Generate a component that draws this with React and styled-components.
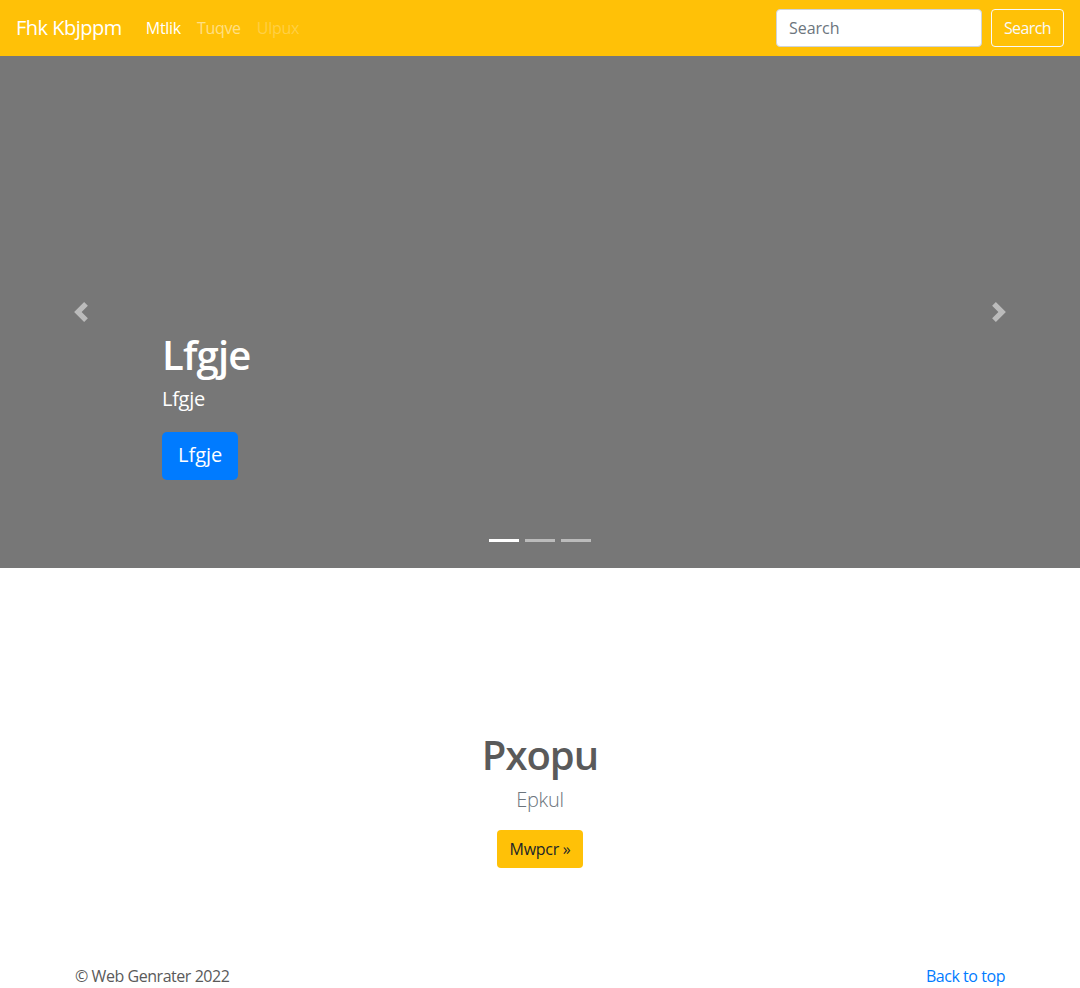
import React from "react";
import styled, { createGlobalStyle } from "styled-components";

const GlobalStyle = createGlobalStyle`
  * { box-sizing: border-box; }
  body {
    margin: 0;
    font-family: "Open Sans", "Noto Sans", Arial, sans-serif;
    font-size: 16px;
    line-height: 1.5;
    color: #5a5a5a;
    background: #fff;
  }
`;

const Navbar = styled.nav`
  height: 56px;
  background: #ffc107;
  display: flex;
  align-items: center;
  padding: 0 16px;
`;

const Brand = styled.a`
  font-size: 20px;
  line-height: 30px;
  color: #fff;
  margin-right: 16px;
  text-decoration: none;
  letter-spacing: -0.5px;
`;

const NavList = styled.ul`
  display: flex;
  list-style: none;
  margin: 0;
  padding: 0;
  flex: 1;
`;

const NavLink = styled.a`
  display: block;
  padding: 8px;
  font-size: 16px;
  text-decoration: none;
  letter-spacing: -0.3px;
  color: ${(p) =>
    p.$state === "active"
      ? "#fff"
      : p.$state === "disabled"
      ? "rgba(255,255,255,.25)"
      : "rgba(255,255,255,.5)"};
`;

const SearchForm = styled.form`
  display: flex;
  align-items: center;
  gap: 9px;
`;

const SearchInput = styled.input`
  width: 206px;
  height: 38px;
  padding: 6px 12px;
  font-family: inherit;
  font-size: 16px;
  color: #495057;
  border: 1px solid #ced4da;
  border-radius: 4px;
  background: #fff;
  &::placeholder { color: #6c757d; }
`;

const OutlineButton = styled.button`
  height: 38px;
  padding: 6px 12px;
  font-family: inherit;
  font-size: 16px;
  color: #f8f9fa;
  background: transparent;
  border: 1px solid #f8f9fa;
  border-radius: 4px;
  letter-spacing: -0.6px;
`;

const Carousel = styled.div`
  position: relative;
  height: 512px;
  background: #777;
  overflow: hidden;
`;

const Caption = styled.div`
  position: absolute;
  left: 15%;
  right: 15%;
  bottom: 88px;
  color: #fff;
  text-align: left;
`;

const CaptionTitle = styled.h1`
  margin: 0 0 5px;
  font-size: 40px;
  font-weight: 600;
  line-height: 48px;
  letter-spacing: -0.8px;
`;

const CaptionText = styled.p`
  margin: 0 0 18px;
  font-size: 20px;
  line-height: 30px;
  letter-spacing: -0.3px;
`;

const PrimaryButton = styled.a`
  display: inline-block;
  height: 48px;
  padding: 8px 16px;
  font-size: 20px;
  line-height: 30px;
  color: #fff;
  background: #007bff;
  border-radius: 5px;
  text-decoration: none;
`;

const Control = styled.a`
  position: absolute;
  top: 0;
  bottom: 0;
  width: 15%;
  ${(p) => (p.$side === "prev" ? "left: 0;" : "right: 0;")}
  display: flex;
  align-items: center;
  justify-content: center;
  opacity: 0.5;
`;

const Indicators = styled.ol`
  position: absolute;
  left: 0;
  right: 0;
  bottom: 26px;
  display: flex;
  justify-content: center;
  gap: 6px;
  margin: 0;
  padding: 0;
  list-style: none;
`;

const Indicator = styled.li`
  width: 30px;
  height: 3px;
  background: #fff;
  opacity: ${(p) => (p.$active ? 1 : 0.5)};
`;

const Marketing = styled.section`
  padding-top: 163px;
  display: flex;
  flex-direction: column;
  align-items: center;
  text-align: center;
`;

const Heading = styled.h2`
  margin: 0 0 6px;
  font-size: 40px;
  font-weight: 600;
  line-height: 48px;
  color: #5a5a5a;
  letter-spacing: -1px;
`;

const Lead = styled.p`
  margin: 0 0 15px;
  font-size: 20px;
  font-weight: 300;
  line-height: 30px;
  color: #6c757d;
  letter-spacing: -0.3px;
`;

const WarningButton = styled.a`
  display: inline-block;
  height: 38px;
  padding: 6px 13px;
  font-size: 16px;
  line-height: 26px;
  color: #212529;
  background: #ffc107;
  border-radius: 4px;
  text-decoration: none;
  letter-spacing: -0.3px;
`;

const Footer = styled.footer`
  width: 960px;
  margin: 96px auto 0;
  padding: 0 15px;
  display: flex;
  justify-content: space-between;
  line-height: 24px;
  font-size: 16px;
  letter-spacing: -0.45px;
`;

const FooterLink = styled.a`
  color: #007bff;
  text-decoration: none;
`;

const Chevron = ({ dir }) => (
  <svg width="20" height="20" viewBox="0 0 8 8" fill="#fff">
    {dir === "prev" ? (
      <path d="M5.25 0l-4 4 4 4 1.5-1.5L4.25 4l2.5-2.5L5.25 0z" />
    ) : (
      <path d="M2.75 0l-1.5 1.5L3.75 4l-2.5 2.5L2.75 8l4-4-4-4z" />
    )}
  </svg>
);

export default function App() {
  return (
    <>
      <GlobalStyle />
      <Navbar>
        <Brand href="#">Fhk Kbjppm</Brand>
        <NavList>
          <li><NavLink $state="active" href="#">Mtlik</NavLink></li>
          <li><NavLink href="#">Tuqve</NavLink></li>
          <li><NavLink $state="disabled" href="#">Ulpux</NavLink></li>
        </NavList>
        <SearchForm onSubmit={(e) => e.preventDefault()}>
          <SearchInput type="text" placeholder="Search" />
          <OutlineButton type="submit">Search</OutlineButton>
        </SearchForm>
      </Navbar>

      <Carousel>
        <Indicators>
          <Indicator $active />
          <Indicator />
          <Indicator />
        </Indicators>
        <Caption>
          <CaptionTitle>Lfgje</CaptionTitle>
          <CaptionText>Lfgje</CaptionText>
          <PrimaryButton href="#">Lfgje</PrimaryButton>
        </Caption>
        <Control $side="prev" href="#">
          <Chevron dir="prev" />
        </Control>
        <Control $side="next" href="#">
          <Chevron dir="next" />
        </Control>
      </Carousel>

      <Marketing>
        <Heading>Pxopu</Heading>
        <Lead>Epkul</Lead>
        <WarningButton href="#">Mwpcr »</WarningButton>
      </Marketing>

      <Footer>
        <span>© Web Genrater 2022</span>
        <FooterLink href="#">Back to top</FooterLink>
      </Footer>
    </>
  );
}
